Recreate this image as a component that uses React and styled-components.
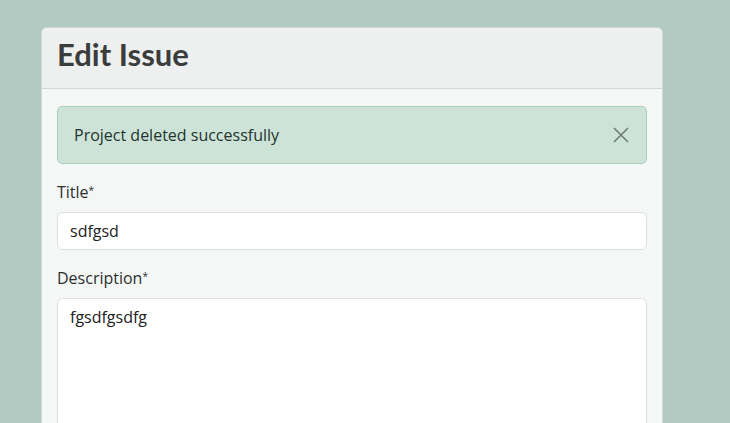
import React, { useState } from 'react';
import styled, { createGlobalStyle } from 'styled-components';

const GlobalStyle = createGlobalStyle`
  html, body {
    margin: 0;
    padding: 0;
    background: #b1cbc3;
    height: 100%;
    overflow: hidden;
  }
  * { box-sizing: border-box; }
`;

const Page = styled.div`
  padding: 27px 0 0 41px;
  font-family: "Open Sans", "Liberation Sans", sans-serif;
  color: #2b2f2d;
`;

const Card = styled.div`
  width: 622px;
  height: 396px;
  background: #f5f7f6;
  border: 1px solid #d3d7d5;
  border-bottom: none;
  border-radius: 6px 6px 0 0;
  overflow: hidden;
`;

const CardHeader = styled.div`
  background: #eef0ef;
  border-bottom: 1px solid #d3d7d5;
  padding: 8px 15px 15px;
`;

const Heading = styled.h1`
  margin: 0;
  font-family: "Lato", "Noto Sans", sans-serif;
  font-weight: 700;
  font-size: 31px;
  line-height: 37px;
  color: #3b3d3c;
`;

const CardBody = styled.div`
  padding: 17px 15px;
`;

const Alert = styled.div`
  display: flex;
  align-items: center;
  justify-content: space-between;
  background: #cde3d8;
  border: 1px solid #a9d0bd;
  border-radius: 5px;
  padding: 16px 16px;
  font-size: 16px;
  line-height: 24px;
  color: #24332c;
  margin-bottom: 16px;
`;

const CloseButton = styled.button`
  border: none;
  background: none;
  padding: 0;
  width: 18px;
  height: 18px;
  display: flex;
  cursor: pointer;
`;

const Field = styled.div`
  margin-bottom: 16px;
`;

const Label = styled.label`
  display: block;
  font-size: 16px;
  line-height: 24px;
  margin-bottom: 8px;
  color: #2b2f2d;

  sup {
    font-size: 10px;
    vertical-align: top;
    position: relative;
    top: -2px;
  }
`;

const Input = styled.input`
  display: block;
  width: 100%;
  height: 38px;
  padding: 6px 12px;
  font: inherit;
  font-size: 16px;
  color: #222;
  background: #fff;
  border: 1px solid #dcdfe4;
  border-radius: 6px;
  outline: none;
`;

const TextArea = styled.textarea`
  display: block;
  width: 100%;
  height: 160px;
  padding: 6px 12px;
  font: inherit;
  font-size: 16px;
  line-height: 24px;
  color: #222;
  background: #fff;
  border: 1px solid #dcdfe4;
  border-radius: 6px;
  resize: none;
  outline: none;
`;

export default function App() {
  const [title, setTitle] = useState('sdfgsd');
  const [desc, setDesc] = useState('fgsdfgsdfg');
  return (
    <Page>
      <GlobalStyle />
      <Card>
        <CardHeader>
          <Heading>Edit Issue</Heading>
        </CardHeader>
        <CardBody>
          <Alert>
            <span>Project deleted successfully</span>
            <CloseButton aria-label="Close">
              <svg width="18" height="18" viewBox="0 0 18 18">
                <path d="M2 2 L16 16 M16 2 L2 16" stroke="#6f7b75" strokeWidth="1.6" fill="none" />
              </svg>
            </CloseButton>
          </Alert>
          <Field>
            <Label>Title<sup>*</sup></Label>
            <Input value={title} onChange={e => setTitle(e.target.value)} />
          </Field>
          <Field>
            <Label>Description<sup>*</sup></Label>
            <TextArea value={desc} onChange={e => setDesc(e.target.value)} />
          </Field>
        </CardBody>
      </Card>
    </Page>
  );
}
